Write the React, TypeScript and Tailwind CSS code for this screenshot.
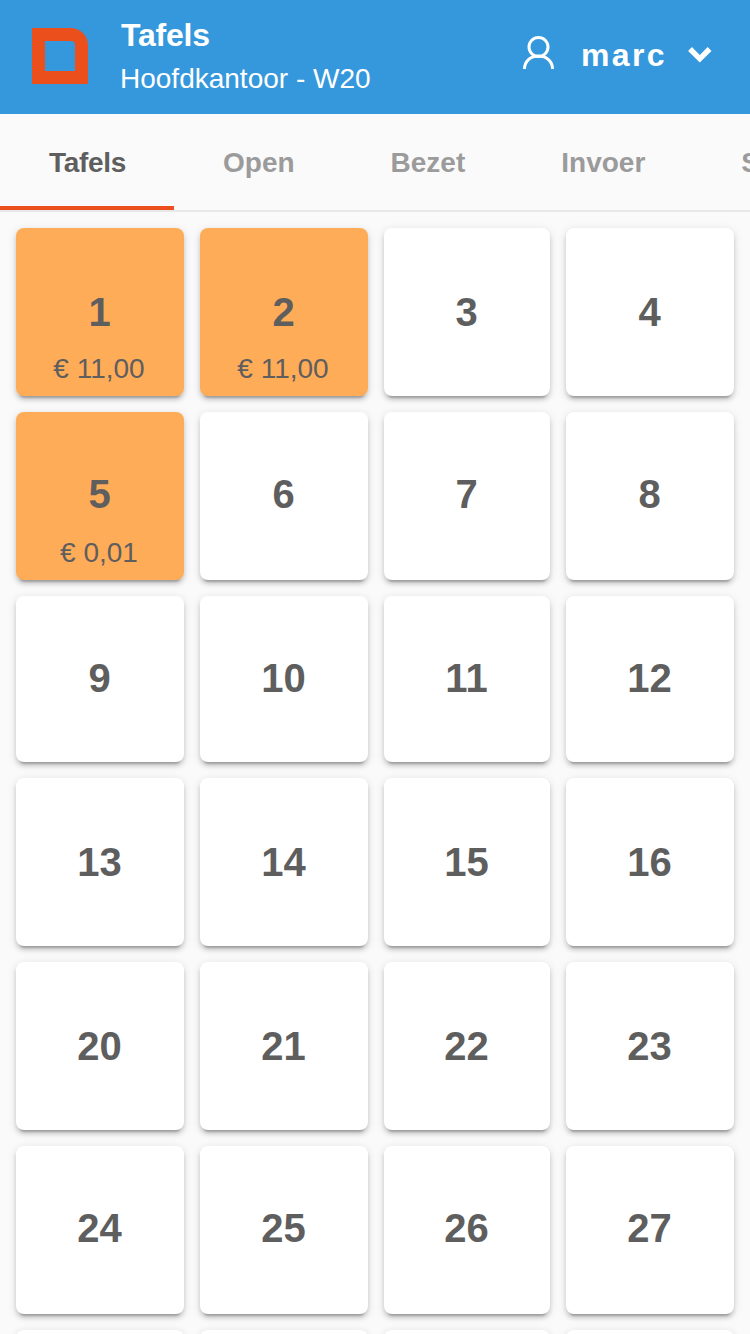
type Table = { id: number; amount?: string };

const rows: { tables: Table[]; shift: string }[] = [
  { shift: "pt-0", tables: [{ id: 1, amount: "€ 11,00" }, { id: 2, amount: "€ 11,00" }, { id: 3 }, { id: 4 }] },
  { shift: "pb-1", tables: [{ id: 5, amount: "€ 0,01" }, { id: 6 }, { id: 7 }, { id: 8 }] },
  { shift: "pb-0.5", tables: [{ id: 9 }, { id: 10 }, { id: 11 }, { id: 12 }] },
  { shift: "pt-0", tables: [{ id: 13 }, { id: 14 }, { id: 15 }, { id: 16 }] },
  { shift: "pt-0", tables: [{ id: 20 }, { id: 21 }, { id: 22 }, { id: 23 }] },
  { shift: "pb-1", tables: [{ id: 24 }, { id: 25 }, { id: 26 }, { id: 27 }] },
  { shift: "pt-0", tables: [{ id: 28 }, { id: 29 }, { id: 30 }, { id: 31 }] },
];

const tabs = ["Tafels", "Open", "Bezet", "Invoer", "Samenvoegen"];

function Header() {
  return (
    <header className="flex h-[114px] shrink-0 items-start bg-[#3598dc] text-white">
      <svg className="mt-7 ml-8 h-14 w-14 shrink-0" viewBox="0 0 56 56">
        <path
          fill="#ea4f1c"
          fillRule="evenodd"
          d="M0 0H38C48 0 56 7 56 17V56H0ZM13 13V43H43V17Q43 13 39 13Z"
        />
      </svg>
      <div className="ml-8 grow pt-3.5">
        <h1 className="pl-px text-[32px] leading-[42px] font-bold tracking-[-0.2px]">Tafels</h1>
        <p className="text-[28px] leading-[46px]">Hoofdkantoor - W20</p>
      </div>
      <button className="flex h-[110px] items-center pr-[38px]">
        <svg className="-mt-[7px] h-9 w-8" viewBox="0 0 32 36" fill="none" stroke="currentColor" strokeWidth="3">
          <circle cx="15.5" cy="13" r="9.5" />
          <path d="M1.5 35C1.5 27.5 7.5 22 15.5 22S29.5 27.5 29.5 35" />
        </svg>
        <span className="ml-[26px] text-[32px] leading-[40px] font-bold tracking-[2.4px]">marc</span>
        <svg className="ml-[21px] h-4 w-6" viewBox="0 0 24 16" fill="none" stroke="currentColor" strokeWidth="5.4">
          <path d="M2 2L11.8 11.8L21.6 2" />
        </svg>
      </button>
    </header>
  );
}

function TabBar() {
  return (
    <nav className="flex h-[98px] shrink-0 overflow-hidden border-b-2 border-[#e8e8e8] text-[28px] font-bold">
      {tabs.map((tab, i) => (
        <button
          key={tab}
          className={
            i === 0
              ? "mr-px h-24 w-[174px] shrink-0 border-b-4 border-[#ea4f1c] pt-1.5 pl-px tracking-[-0.3px] text-[#5e5e5e]"
              : "h-24 shrink-0 border-b-4 border-transparent px-12 pt-1.5 text-[#9b9b9b]"
          }
        >
          {tab}
        </button>
      ))}
    </nav>
  );
}

function TableCard({ table, shift }: { table: Table; shift: string }) {
  return (
    <div
      className={`relative flex items-center justify-center rounded-lg text-[#5e5e5e] shadow-[0_6px_2px_-4px_rgba(0,0,0,0.2),0_4px_4px_0_rgba(0,0,0,0.14),0_2px_10px_0_rgba(0,0,0,0.12)] ${table.amount ? "bg-[#ffac59]" : "bg-white"}`}
    >
      <span className={`pr-px text-[40px] leading-[48px] font-bold ${shift}`}>{table.id}</span>
      {table.amount && (
        <span className="absolute inset-x-0 bottom-[9px] pr-0.5 text-center text-[28px] leading-9">{table.amount}</span>
      )}
    </div>
  );
}

export default function App() {
  return (
    <div className="flex h-[1334px] w-[750px] flex-col overflow-hidden bg-[#fafafa] font-['Liberation_Sans',Arial,sans-serif]">
      <Header />
      <TabBar />
      <main className="grid min-h-0 grow grid-cols-[168px_168px_166px_168px] grid-rows-[168px_168px_166px_168px_168px_168px_168px] gap-4 overflow-hidden p-4">
        {rows.flatMap((row) => row.tables.map((t) => <TableCard key={t.id} table={t} shift={row.shift} />))}
      </main>
    </div>
  );
}
